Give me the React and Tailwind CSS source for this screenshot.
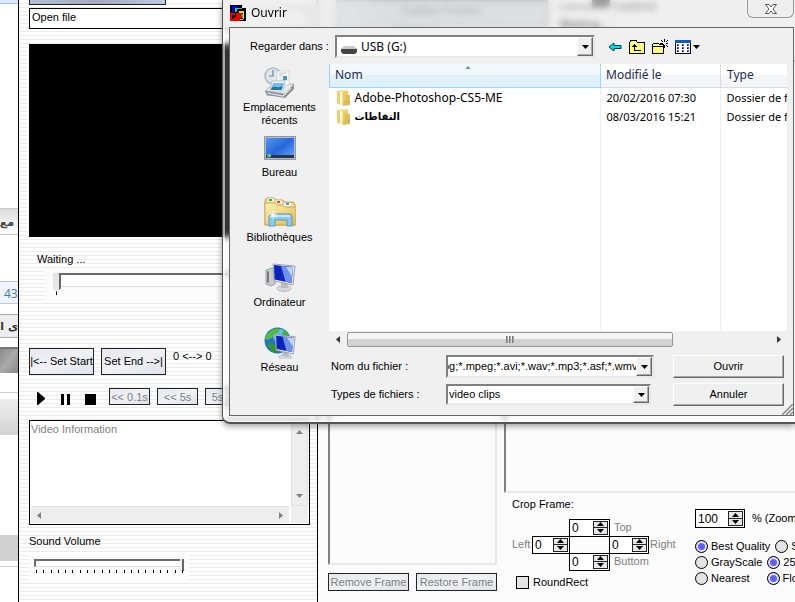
import { useState } from 'react';

const formats = 'pg;*.mpeg;*.avi;*.wav;*.mp3;*.asf;*.wmv';

const files = [
  { name: 'Adobe-Photoshop-CS5-ME', date: '20/02/2016 07:30', type: 'Dossier de fichiers' },
  { name: 'التقاطات', date: '08/03/2016 15:21', type: 'Dossier de fichiers', arabic: true },
];

const sunken = 'border-2 border-t-[#808080] border-l-[#808080] border-b-[#e8e8e8] border-r-[#e8e8e8]';
const raised = 'border border-t-white border-l-white border-b-[#696969] border-r-[#696969] shadow-[inset_-1px_-1px_0_#a8a8a8]';
const skin = 'border border-[#222] bg-linear-to-br from-[#e6e8ee] via-[#f0f1f5] to-[#dfe2ea]';

function Triangle({ up, className = 'w-[7px] h-1' }) {
  return (
    <svg viewBox="0 0 7 4" className={className} fill="currentColor" aria-hidden="true">
      <path d={up ? 'M0 4 3.5 0 7 4z' : 'M0 0h7L3.5 4z'} />
    </svg>
  );
}

function SideTriangle({ right }) {
  return (
    <svg viewBox="0 0 4 7" className="w-1 h-[7px]" fill="currentColor" aria-hidden="true">
      <path d={right ? 'M0 0 4 3.5 0 7z' : 'M4 0v7L0 3.5z'} />
    </svg>
  );
}

function RecentIcon() {
  return (
    <svg viewBox="0 0 32 32" className="w-8 h-8" aria-hidden="true">
      <path d="M1 25 8 18 30 17 23 28 3 29z" fill="#b9bcc0" />
      <path d="M1 24 8 18 30 17 21 27z" fill="#e8eaec" stroke="#8b8f94" strokeWidth=".6" />
      <path d="M1 24 20 27 30 18v4l-9 9-18-3z" fill="#8c9095" />
      <path d="M3 26 19 29l8-8" fill="none" stroke="#dfe2e4" strokeWidth="1.200" />
      <circle cx="9" cy="9" r="8" fill="#dce4ea" stroke="#b3bec6" strokeWidth="1.6" />
      <circle cx="9" cy="9" r="6" fill="#dfe8ee" />
      <path d="M9 3v6H5" stroke="#6c8394" strokeWidth="1.2" fill="none" />
      <path d="M13 4h12v14H13z" fill="#fafafa" stroke="#c6cacd" strokeWidth=".7" />
      <path d="M15 6h8M15 8h4M15 10h3M15 13h8" stroke="#b8bec4" strokeWidth=".8" />
      <path d="M19 9h4v4h-4z" fill="#3f9ec4" />
      <path d="M8 14h13l-2 10H6z" fill="#f5f8fb" stroke="#a9b3bb" strokeWidth=".7" />
      <path d="M9 16h11l-2 7H7z" fill="#75b9ee" />
      <path d="M7.500 21c3-3 6 1 11-2l-1 4H7z" fill="#178098" />
    </svg>
  );
}

function DesktopIcon() {
  return (
    <svg viewBox="0 0 32 32" className="w-8 h-8" aria-hidden="true">
      <defs>
        <linearGradient id="desk" x2="1" y2="1">
          <stop stopColor="#4f96ec" />
          <stop offset=".5" stopColor="#2867dc" />
          <stop offset="1" stopColor="#63a6fa" />
        </linearGradient>
      </defs>
      <path d="M.5 4.500h31v23H.5z" fill="#b5bcc4" stroke="#8f969d" />
      <path d="M2 6h28v20H2z" fill="url(#desk)" />
      <path d="M2 23h28v3H2z" fill="#25364d" />
      <circle cx="5" cy="23.500" r="2.300" fill="#35a6a8" />
      <circle cx="5.500" cy="23.500" r="1" fill="#f2c843" />
    </svg>
  );
}

function LibrariesIcon() {
  return (
    <svg viewBox="0 0 32 32" className="w-8 h-8" aria-hidden="true">
      <defs>
        <linearGradient id="lib" x2="1" y2="1">
          <stop stopColor="#fff0b8" />
          <stop offset="1" stopColor="#e3ba50" />
        </linearGradient>
      </defs>
      <path d="M1 28V3l2-2h7l2 2h7l1 2h9l2 2v21z" fill="#f0d78b" stroke="#b9933c" strokeWidth=".8" />
      <path d="M4 1.500h6v3H4zM12 3.500h6v3h-6zM20 6h7v3h-7z" fill="#fff" />
      <path d="M5 2h3v2H5z" fill="#29b53a" />
      <path d="M13 4h3v2h-3z" fill="#de4c2e" />
      <path d="M22 6h3v2h-3z" fill="#2f9be6" />
      <path d="M1 6h10l2 2h6l2 2h11v18H1z" fill="url(#lib)" stroke="#c79f43" strokeWidth=".8" />
      <path d="M5 29V19l2-2h19l2 2v10h-5v-6H11v6z" fill="#8ccbea" stroke="#4d9fc8" />
      <path d="M7 19h19" stroke="#dcf3fd" strokeWidth="1.500" />
      <path d="M9 13v9M5 17.500h8M6 14.500l6 6M12 14.500l-6 6" stroke="#fff" strokeWidth=".8" />
    </svg>
  );
}

function Monitor() {
  return (
    <>
      <ellipse cx="20" cy="26.500" rx="7" ry="3" fill="#d7dadd" stroke="#a4a8ac" strokeWidth=".7" />
      <path d="M17 20h6l1 6h-7z" fill="#b9bdc1" />
      <path d="m9 2 22 2-2 19-19-4z" fill="#e5e8ea" stroke="#8d9297" strokeWidth=".8" />
      <path d="m10 3 19 2-1.500 16L10.500 17.500z" fill="#0b24bd" />
      <path d="m17 4 12 1-1.500 16-6-1.300z" fill="#6f92ef" />
      <path d="m22 5 7 .5-1 9z" fill="#c1d2fb" />
    </>
  );
}

function ComputerIcon() {
  return (
    <svg viewBox="0 0 32 32" className="w-8 h-8" aria-hidden="true">
      <path d="m2 8 6-2 3 1v15l-4 2-5-2z" fill="#c9cdd2" stroke="#83888d" strokeWidth=".7" />
      <path d="M3 9.500 5 10v11l-2-1z" fill="#74787c" />
      <path d="M3 9.500h2" stroke="#5ac850" />
      <Monitor />
    </svg>
  );
}

function NetworkIcon() {
  return (
    <svg viewBox="0 0 32 32" className="w-8 h-8" aria-hidden="true">
      <circle cx="13.500" cy="13.500" r="13" fill="#2375c4" />
      <circle cx="16" cy="9" r="7" fill="#63c1ed" />
      <path d="M5 5c4-4 8-4 11-3l-2 4-4 1-2 4-5 2-2-1c0-3 2-5 4-7z" fill="#55bb3f" />
      <path d="m6 16 6 2 3 4-2 4-4-1c-4-3-5-6-5-9z" fill="#2f992c" />
      <path d="m20 2 5 5-3 3-4-3z" fill="#48ae45" />
      <g transform="translate(3 6) scale(.91)">
        <Monitor />
      </g>
    </svg>
  );
}

function FolderIcon() {
  return (
    <svg viewBox="0 0 16 16" className="w-4 h-4 shrink-0" aria-hidden="true">
      <path d="M1 1h6v14l-6-1z" fill="#edcf70" />
      <path d="M3 0h9v13H6z" fill="#f7e49d" />
      <path d="m7 2 5-1v13l-5 2z" fill="#e9c963" />
      <path d="M10 5h4v10l-7 1z" fill="#dfbd58" />
      <path d="M5 2v13" stroke="#fff7cf" strokeWidth="2" />
      <path d="M12 11h1v2h-1z" fill="#5aaed5" />
    </svg>
  );
}

function AppIcon() {
  return (
    <svg viewBox="0 0 16 16" className="w-4 h-4" shapeRendering="crispEdges" aria-hidden="true">
      <path d="M0 0h12v3h4v13H0z" />
      <path d="M2 1h6v2H4v4H2z" fill="#00f" />
      <path d="M5 3h7v1H7v3H5z" fill="#1cc" />
      <path d="M9 6h5v2H9zM13 8h1v6h-1zM9 14h4v1H9z" fill="#dfdf14" />
      <path d="M11 9h2v4h-2z" fill="#43ca32" />
      <path d="M0 8h5v2H2v4h2v-2h2V8h2v8H0zM8 8h4v2h-2v1h2v2h-2v3H8z" fill="#e00" />
    </svg>
  );
}

const places = [
  { label: 'Emplacements récents', icon: RecentIcon },
  { label: 'Bureau', icon: DesktopIcon },
  { label: 'Bibliothèques', icon: LibrariesIcon },
  { label: 'Ordinateur', icon: ComputerIcon },
  { label: 'Réseau', icon: NetworkIcon },
];

function BackgroundPage() {
  return (
    <div className="w-[18px] shrink-0 flex flex-col overflow-hidden whitespace-nowrap bg-white font-['DejaVu_Sans',sans-serif]">
      <div className="h-1 shrink-0 bg-[#dbe8f7] border-b border-[#a5bddb]" />
      <div className="h-[204px] shrink-0" />
      <div className="h-[27px] shrink-0 border-y border-[#c8c8c8] bg-linear-to-b from-[#ddd] to-white pr-1 text-[11px] leading-7 font-bold text-[#444]" dir="rtl">مع</div>
      <div className="h-[46px] shrink-0" />
      <div className="h-[23px] shrink-0 border-y border-[#b9cce2] bg-[#f0f5fb] pl-1 text-xs leading-6 text-[#4779a5] font-['Open_Sans',sans-serif]">43</div>
      <div className="h-[10px] shrink-0" />
      <div className="h-6 shrink-0 border-y border-[#aaa] bg-[#eee] text-[11px] leading-6 font-bold text-[#333]" dir="rtl">ى ا</div>
      <div className="h-[9px] shrink-0" />
      <div className="h-[26px] shrink-0 border-t-2 border-[#777] bg-linear-to-br from-[#888] via-[#aaa] to-[#888]" />
      <div className="h-5 shrink-0 border-b border-[#ccc]" />
      <div className="h-[6px] shrink-0" />
      <div className="h-9 shrink-0 bg-linear-to-b from-[#eee] to-[#d2d2d2]" />
      <div className="h-[100px] shrink-0" />
      <div className="h-[26px] shrink-0 bg-[#d2d2d2]" />
      <div className="h-[6px] shrink-0 border-b border-[#ccc]" />
    </div>
  );
}

function VideoPanel() {
  return (
    <section className="w-[300px] shrink-0 border-x border-black pl-[10px] pr-[7px] flex flex-col bg-[repeating-linear-gradient(to_bottom,#fff_0,#fff_3px,#ebebeb_3px,#ebebeb_4px)]">
      <div className="w-[137px] h-[5px] border border-t-0 border-[#222] bg-linear-to-r from-[#b3bfd2] via-[#a2aabc] to-[#bccbe2]" />
      <input
        aria-label="Status"
        readOnly
        value="Open file"
        className="mt-[3px] h-[21px] border border-black bg-white px-0.5 pb-1 outline-none"
      />
      <div className="mt-[15px] h-[193px] bg-black" />
      <label htmlFor="position" className="mt-[14px] ml-2 h-4 leading-4">Waiting ...</label>
      <div className="mt-[2px] ml-4 h-8 bg-[#fbfbfb] pl-2 pt-0.5">
        <input
          id="position"
          type="range"
          defaultValue="0"
          className="block w-full h-[18px] appearance-none bg-transparent [&::-webkit-slider-runnable-track]:h-[14px] [&::-webkit-slider-runnable-track]:border-t-2 [&::-webkit-slider-runnable-track]:border-[#696969] [&::-webkit-slider-runnable-track]:border-b [&::-webkit-slider-runnable-track]:border-b-[#ddd] [&::-webkit-slider-runnable-track]:bg-white [&::-webkit-slider-thumb]:appearance-none [&::-webkit-slider-thumb]:-mt-0.5 [&::-webkit-slider-thumb]:h-[19px] [&::-webkit-slider-thumb]:w-2 [&::-webkit-slider-thumb]:bg-[#e6e6e6] [&::-webkit-slider-thumb]:border-r-2 [&::-webkit-slider-thumb]:border-[#696969] [&::-webkit-slider-thumb]:[clip-path:polygon(0_0,100%_0,100%_80%,50%_100%,0_80%)]"
        />
        <div className="ml-[3px] w-px h-1 mt-0.5 bg-black" />
      </div>
      <div className="mt-[47px] flex gap-[7px] h-[27px] whitespace-nowrap">
        <button className={`w-[65px] ${skin}`}>|&lt;-- Set Start</button>
        <button className={`w-[65px] ${skin}`}>Set End --&gt;|</button>
        <span>0 &lt;--&gt; 0</span>
      </div>
      <div className="mt-[13px] h-[17px] flex items-start text-[#808080] whitespace-nowrap">
        <button aria-label="Play" className="ml-2 mt-1 w-6">
          <svg viewBox="0 0 8 13" className="w-2 h-[13px]"><path d="M0 0h1l7 6v1l-7 6H0z" fill="#000" /></svg>
        </button>
        <button aria-label="Pause" className="mt-[6px] w-6">
          <svg viewBox="0 0 9 11" className="w-[9px] h-[11px]"><path d="M0 0h3v11H0zM6 0h3v11H6z" fill="#000" /></svg>
        </button>
        <button aria-label="Stop" className="mt-[6px] w-[24px] h-[11px] flex"><span className="w-[11px] h-[11px] bg-black" /></button>
        <div className="flex gap-[7px] h-[17px] leading-[14px]">
          <button disabled className={`w-[41px] ${skin}`}>&lt;&lt; 0.1s</button>
          <button disabled className={`w-[41px] ${skin}`}>&lt;&lt; 5s</button>
          <button disabled className={`w-[41px] ${skin}`}>5s &gt;&gt;</button>
        </div>
      </div>
      <div className="mt-[15px] h-[105px] border border-black bg-white grid grid-cols-[1fr_17px] grid-rows-[1fr_17px] p-px">
        <textarea aria-label="Video Information" readOnly value="Video Information" className="resize-none overflow-hidden leading-[14px] text-[#808080] outline-none" />
        <div className="bg-[#eee] border border-[#e2e2e2] text-[#808080] flex flex-col items-center justify-between py-[7px]">
          <Triangle up />
          <Triangle />
        </div>
        <div className="mr-0.5 bg-[#eee] border-t border-[#e2e2e2] text-[#808080] flex items-center justify-between px-[6px]">
          <SideTriangle />
          <SideTriangle right />
        </div>
        <div className="bg-[#eee]" />
      </div>
      <label htmlFor="volume" className="mt-2 h-4 leading-4">Sound Volume</label>
      <div className="mt-[6px] w-[161px] h-7 bg-[#fbfbfb] pl-[5px] pt-[2px]">
        <input
          id="volume"
          type="range"
          defaultValue="100"
          className="block w-[150px] h-3 appearance-none bg-transparent [&::-webkit-slider-runnable-track]:h-2 [&::-webkit-slider-runnable-track]:border-t-2 [&::-webkit-slider-runnable-track]:border-l-2 [&::-webkit-slider-runnable-track]:border-b [&::-webkit-slider-runnable-track]:border-[#696969] [&::-webkit-slider-runnable-track]:border-b-[#ddd] [&::-webkit-slider-runnable-track]:bg-white [&::-webkit-slider-thumb]:appearance-none [&::-webkit-slider-thumb]:-mt-0.5 [&::-webkit-slider-thumb]:h-3 [&::-webkit-slider-thumb]:w-1 [&::-webkit-slider-thumb]:bg-[#eee] [&::-webkit-slider-thumb]:border-r-2 [&::-webkit-slider-thumb]:border-[#696969]"
        />
        <div className="mt-px ml-0.5 w-[147px] flex justify-between">
          {Array.from({ length: 21 }, (_, i) => <span key={i} className="w-px h-[3px] bg-black" />)}
        </div>
      </div>
    </section>
  );
}

function Spinner({ label, value, className }) {
  return (
    <div className={`flex border border-black bg-white ${className}`}>
      <input aria-label={label} defaultValue={value} className="min-w-0 flex-1 pl-0.5 outline-none text-xs leading-3" />
      <div className="w-[15px] shrink-0 m-px flex flex-col border border-[#222] bg-[#e6e6ea] divide-y divide-[#222]">
        <button aria-label={`${label} up`} className="flex-1 flex items-center justify-center"><Triangle up /></button>
        <button aria-label={`${label} down`} className="flex-1 flex items-center justify-center"><Triangle /></button>
      </div>
    </div>
  );
}

function Radio({ name, children, defaultChecked }) {
  return (
    <label className="flex items-center gap-[3px] whitespace-nowrap">
      <input
        type="radio"
        name={name}
        defaultChecked={defaultChecked}
        className="appearance-none w-[13px] h-[13px] shrink-0 rounded-full border border-black bg-[#e4e4e4] checked:bg-[#5f5fff] checked:shadow-[inset_0_0_0_2px_#e8e8f4]"
      />
      {children}
    </label>
  );
}

function FramePanel() {
  return (
    <section className="flex-1 min-w-0 bg-[#fbfbfb] overflow-hidden pl-[10px]">
      <div className="h-[60px] flex gap-3 whitespace-nowrap">
        <div className="ml-2 w-[212px] h-[28px] shrink-0 border-2 border-[#999] bg-[#d3d6dc] text-center text-[#555]">Capture Frames</div>
        <div>
          <div className="flex h-4 gap-1 leading-3"><span className="w-[50px] h-2 border-b-2 border-r-[18px] border-[#333] bg-white" />Last(ms)</div>
          <div className="font-bold leading-4">Waiting...</div>
        </div>
      </div>
      <div className="flex gap-[7px]">
        <div className="w-[169px] shrink-0">
          <div className={`h-[505px] ${sunken}`} />
          <div className="mt-2 flex gap-[7px] h-[18px] leading-[14px] text-[#808080] whitespace-nowrap">
            <button disabled className={`flex-1 ${skin}`}>Remove Frame</button>
            <button disabled className={`flex-1 ${skin}`}>Restore Frame</button>
          </div>
        </div>
        <div className="flex-1 min-w-0">
          <div className={`h-[433px] ${sunken} border-r-0`} />
          <div className="flex pl-2">
            <div className="w-[183px] shrink-0 pt-[3px]">
              <div className="leading-4">Crop Frame:</div>
              <div className="mt-[7px] grid grid-cols-[20px_37px_40px_40px_1fr] grid-rows-[17px_17px_17px] items-center text-[#808080]">
                <Spinner label="Top" value="0" className="col-start-3 row-start-1 h-[18px] -mr-px text-black" />
                <span className="col-start-4 row-start-1 pl-[5px]">Top</span>
                <span className="col-start-1 row-start-2">Left</span>
                <Spinner label="Left" value="0" className="col-start-2 row-start-2 h-[18px] -mr-px text-black" />
                <Spinner label="Right" value="0" className="col-start-4 row-start-2 h-[18px] text-black" />
                <span className="col-start-5 row-start-2 pl-px">Right</span>
                <Spinner label="Bottom" value="0" className="col-start-3 row-start-3 h-[18px] -mr-px text-black" />
                <span className="col-start-4 row-start-3 pl-[5px]">Buttom</span>
              </div>
              <label className="mt-1 ml-1 flex items-center gap-1">
                <input type="checkbox" className="appearance-none w-[13px] h-[13px] border border-black bg-[#e4e4e4]" />
                RoundRect
              </label>
            </div>
            <div className="pt-4">
              <div className="flex items-center gap-[7px] whitespace-nowrap">
                <Spinner label="Zoom" value="100" className="w-[50px] h-[19px]" />
                <span>% (Zoom)</span>
              </div>
              <div className="mt-[10px]">
                <div className="flex gap-[5px] h-4"><Radio name="q" defaultChecked>Best Quality</Radio><Radio name="s">Stretch</Radio></div>
                <div className="flex gap-[5px] h-4"><Radio name="g">GrayScale</Radio><Radio name="c" defaultChecked>256 Colors</Radio></div>
                <div className="flex gap-[17px] h-4"><Radio name="g">Nearest</Radio><Radio name="d" defaultChecked>Floyd</Radio></div>
              </div>
            </div>
          </div>
        </div>
      </div>
    </section>
  );
}

function FileList() {
  return (
    <div className="mr-[6px] bg-white overflow-hidden font-['Noto_Sans',sans-serif] text-xs">
      <div className="h-[267px] overflow-hidden bg-[linear-gradient(to_right,transparent_271px,#e6f1fb_271px,#e6f1fb_272px,transparent_272px,transparent_391px,#e6f1fb_391px,#e6f1fb_392px,transparent_392px)]">
        <table className="w-full table-fixed border-collapse text-left whitespace-nowrap">
          <thead>
            <tr className="h-[23px] text-[#1e2a55]">
              <th className="relative w-[271px] p-0 pl-[5px] font-normal border border-t-0 border-[#96d9f9] bg-linear-to-b from-[#f2f9fc] from-50% to-[#e1f1f9] to-50%">
                Nom
                <span className="absolute top-0.5 left-1/2 text-[#6393ad] flex"><Triangle up className="w-[6px] h-[3px]" /></span>
              </th>
              <th className="w-[120px] p-0 pl-[5px] font-normal border-b border-r border-[#d9dde3] bg-linear-to-b from-white from-50% to-[#f4f5f7] to-50%">Modifié le</th>
              <th className="p-0 pl-[6px] font-normal border-b border-[#d9dde3] bg-linear-to-b from-white from-50% to-[#f4f5f7] to-50%">Type</th>
            </tr>
          </thead>
          <tbody>
            <tr className="h-px" />
            {files.map((f) => (
              <tr key={f.name} className="h-[19px] leading-4">
                <td className="p-0 pl-[6px]">
                  <div className="flex items-center gap-[3px]">
                    <FolderIcon />
                    <span className={f.arabic ? "font-['DejaVu_Sans',sans-serif] text-[10px] font-bold" : ''}>{f.name}</span>
                  </div>
                </td>
                <td className="p-0 pl-[6px] text-[11px]">{f.date}</td>
                <td className="p-0 pl-[6px] text-[11px] overflow-hidden">{f.type}</td>
              </tr>
            ))}
          </tbody>
        </table>
      </div>
      <div className="h-4 bg-[#f0f0f0] flex items-center text-[#333]">
        <button aria-label="Défiler à gauche" className="w-[18px] flex justify-center"><SideTriangle /></button>
        <div className="w-[326px] h-[15px] shrink-0 rounded-xs border border-[#979797] bg-linear-to-b from-[#f4f4f4] from-50% to-[#d2d2d2] to-50% flex items-center justify-center gap-px">
          <span className="w-0.5 h-[7px] bg-linear-to-r from-[#666] to-[#bbb]" />
          <span className="w-0.5 h-[7px] bg-linear-to-r from-[#666] to-[#bbb]" />
          <span className="w-0.5 h-[7px] bg-linear-to-r from-[#666] to-[#bbb]" />
        </div>
        <button aria-label="Défiler à droite" className="ml-auto w-[17px] flex justify-center"><SideTriangle right /></button>
      </div>
    </div>
  );
}

function Toolbar() {
  return (
    <div className="flex items-center gap-[7px]">
      <button aria-label="Retour">
        <svg viewBox="0 0 14 12" className="w-[14px] h-3 block"><path d="M1 6l5-4v2.500h7v3H6V10z" fill="#00e5e5" stroke="#003c3c" /></svg>
      </button>
      <button aria-label="Dossier parent">
        <svg viewBox="0 0 16 14" className="w-4 h-[14px] block" shapeRendering="crispEdges">
          <path d="M.5 13.500v-11l1.500-2h5l1.500 2h7v11z" fill="#ffff70" stroke="#000" />
          <path d="M5 5h1v5h6v1H5z" fill="#000" />
          <path d="M3 7h5v-1H7V5H6V4H5v1H4v1H3z" fill="#000" />
        </svg>
      </button>
      <button aria-label="Nouveau dossier">
        <svg viewBox="0 0 16 16" className="w-4 h-4 block" shapeRendering="crispEdges">
          <path d="M.5 14.500v-9L2 4h4l1.500 1.500h4v9z" fill="#ffff70" stroke="#000" />
          <path d="M1 7h11v1H1z" fill="#000" />
          <path d="M12 0h1v3h-1zM12 6h1v3h-1zM8 4h3v1H8zM14 4h2v1h-2zM9 1h1v1H9zM10 2h1v1h-1zM15 1h1v1h-1zM14 2h1v1h-1zM14 6h1v1h-1zM15 7h1v1h-1z" fill="#000" />
        </svg>
      </button>
      <button aria-label="Affichage" className="flex items-center gap-0.5">
        <svg viewBox="0 0 16 14" className="w-4 h-[14px] block" shapeRendering="crispEdges">
          <path d="M0 0h16v14H0z" fill="#000" />
          <path d="M1 3h14v10H1z" fill="#fff" />
          <path d="M0 0h16v3H0z" fill="#0a5bc4" />
          <path d="M2 4h2v2H2zm5 0h2v2H7zm5 0h2v2h-2zM2 7h2v2H2zm5 0h2v2H7zm5 0h2v2h-2zM2 10h2v2H2zm5 0h2v2H7zm5 0h2v2h-2z" fill="#5a5aa8" />
          <path d="M2 5h1v1H2zm5 0h1v1H7zm5 0h1v1h-1zM2 8h1v1H2zm5 0h1v1H7zm5 0h1v1h-1zM2 11h1v1H2zm5 0h1v1H7zm5 0h1v1h-1z" fill="#00005f" />
        </svg>
        <Triangle />
      </button>
    </div>
  );
}

function DropButton({ label }) {
  return (
    <button aria-label={label} className={`w-4 shrink-0 bg-[#f0f0f0] flex items-center justify-center ${raised}`}>
      <Triangle />
    </button>
  );
}

function OpenDialog({ onClose }) {
  return (
    <div role="dialog" aria-label="Ouvrir" className="absolute left-[222px] right-0 top-0 rounded-bl-lg border-l border-b-2 border-[#555] bg-white/20 backdrop-blur-[3px] pl-[6px] pb-[6px] shadow-[inset_2px_-2px_0_#ffffff90,0_2px_6px_#0006]">
      <header className="h-[27px] -ml-[6px] pl-[7px] flex bg-linear-to-r from-[#f0f0f0] via-[#dcdcdc]/50 via-30% to-[#e4e4e4]/50">
        <div className="pt-[5px] flex gap-[5px] font-['Noto_Sans',sans-serif] text-xs leading-4">
          <AppIcon />
          <h1>Ouvrir</h1>
        </div>
        <button aria-label="Fermer" onClick={onClose} className="ml-auto mr-px w-[47px] h-[18px] rounded-b-md border border-t-0 border-[#999] bg-[#eee] flex items-center justify-center">
          <svg viewBox="0 0 12 10" className="w-3 h-[10px]"><path d="M.5.5h3.500L6 3 8 .5h3.500L8 5l3.500 4.500H8L6 7 4 9.500H.5L4 5z" fill="#fff" stroke="#555" /></svg>
        </button>
      </header>
      <div className="relative mr-px border border-[#666] bg-[#f0f0f0] h-[389px]">
        <div className="flex items-center pt-[7px]">
          <label htmlFor="place" className="w-[105px] shrink-0 pl-5">Regarder dans :</label>
          <div className={`w-[260px] h-[23px] shrink-0 flex items-stretch bg-white ${sunken}`}>
            <svg viewBox="0 0 16 8" className="mt-[9px] ml-1 w-4 h-2 shrink-0" aria-hidden="true"><path d="M3 0h10l3 3H0z" fill="#c8c8c8" /><path d="M0 3h16v3l-2 2H2L0 6z" fill="#444" /></svg>
            <select id="place" className="flex-1 min-w-0 appearance-none bg-transparent pl-1 outline-none font-['Noto_Sans',sans-serif] text-xs leading-4">
              <option>USB (G:)</option>
            </select>
            <DropButton label="Choisir un emplacement" />
          </div>
          <div className="ml-[13px]"><Toolbar /></div>
        </div>
        <div className="mt-[6px] flex">
          <nav className="w-[99px] shrink-0 pt-[3px] grid auto-rows-[65px] content-start">
            {places.map(({ label, icon: Icon }) => (
              <button key={label} className="flex flex-col items-center gap-0.5 px-2 leading-[13px]">
                <Icon />
                {label}
              </button>
            ))}
          </nav>
          <div className="flex-1 min-w-0">
            <FileList />
            <div className="mt-[8px] grid grid-cols-[117px_208px_111px] gap-y-[5px] items-center">
              <label htmlFor="filename" className="pl-0.5">Nom du fichier :</label>
              <div className={`h-[23px] flex bg-white ${sunken}`}>
                <input id="filename" defaultValue={formats} className="flex-1 min-w-0 -indent-[5px] outline-none" />
                <DropButton label="Noms récents" />
              </div>
              <button className={`ml-[19px] -mr-[19px] h-[23px] bg-[#f0f0f0] ${raised}`}>Ouvrir</button>
              <label htmlFor="filetype" className="pl-0.5">Types de fichiers :</label>
              <div className={`mr-[3px] h-[21px] flex bg-white ${sunken}`}>
                <select id="filetype" className="flex-1 min-w-0 appearance-none bg-transparent pl-px outline-none">
                  <option>video clips</option>
                </select>
                <DropButton label="Types" />
              </div>
              <button onClick={onClose} className={`ml-[19px] -mr-[19px] h-[23px] bg-[#f0f0f0] ${raised}`}>Annuler</button>
            </div>
          </div>
        </div>
        <svg viewBox="0 0 11 11" className="absolute right-0 bottom-0 w-[11px] h-[11px]" aria-hidden="true"><path d="M0 11 11 0M4 11l7-7M8 11l3-3" stroke="#888" strokeWidth="1.500" /></svg>
      </div>
    </div>
  );
}

export default function App() {
  const [open, setOpen] = useState(true);

  return (
    <main className="relative min-h-screen flex overflow-hidden bg-white text-black text-[11px] font-['Liberation_Sans',Arial,sans-serif]">
      <BackgroundPage />
      <VideoPanel />
      <FramePanel />
      {open && <OpenDialog onClose={() => setOpen(false)} />}
    </main>
  );
}
